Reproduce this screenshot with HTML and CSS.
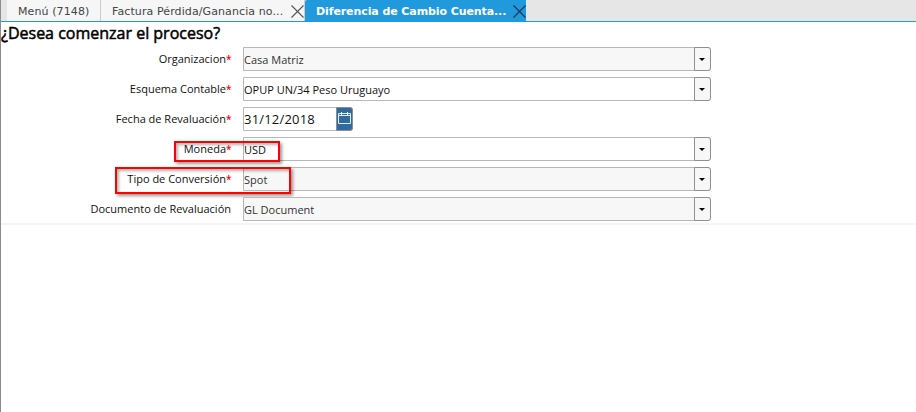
FILE: index.html
```html
<!DOCTYPE html>
<html lang="es">
<head>
<meta charset="utf-8">
<title>Diferencia de Cambio Cuenta</title>
<link rel="stylesheet" href="styles.css">
</head>
<body>
<nav class="tabs">
  <div class="tab tab-menu"><span>Menú (7148)</span></div>
  <div class="tab tab-invoice"><span>Factura Pérdida/Ganancia no...</span>
    <svg class="close" viewBox="0 0 13 13"><path d="M.5 .5l12 12M12.5 .5l-12 12"/></svg></div>
  <div class="tab tab-active"><span>Diferencia de Cambio Cuenta...</span>
    <svg class="close" viewBox="0 0 13 13"><path d="M.5 .5l12 12M12.5 .5l-12 12"/></svg></div>
</nav>
<main class="panel">
  <h1><span>¿Desea comenzar el proceso?</span></h1>
  <form class="form">
    <div class="row"><label>Organizacion<b>*</b></label><div class="combo readonly"><span>Casa Matriz</span><i class="arrow"></i></div></div>
    <div class="row"><label>Esquema Contable<b>*</b></label><div class="combo"><span>OPUP UN/34 Peso Uruguayo</span><i class="arrow"></i></div></div>
    <div class="row"><label>Fecha de Revaluación<b>*</b></label><div class="date"><span>31/12/2018</span><div class="calendar"><svg viewBox="0 0 13 12"><path d="M.5 1.5h12v10H.5zM.5 3.5h12M3.5 0v3M9.5 0v3"/></svg></div></div></div>
    <div class="row"><label>Moneda<b>*</b></label><div class="combo"><span>USD</span><i class="arrow"></i></div><div class="mark mark-currency"></div></div>
    <div class="row"><label>Tipo de Conversión<b>*</b></label><div class="combo readonly"><span>Spot</span><i class="arrow"></i></div><div class="mark mark-type"></div></div>
    <div class="row"><label>Documento de Revaluación</label><div class="combo readonly"><span>GL Document</span><i class="arrow"></i></div></div>
  </form>
</main>
</body>
</html>
```
FILE: styles.css
```css
* { box-sizing: border-box; }
body {
  margin: 0;
  height: 412px;
  overflow: hidden;
  border-left: 1px solid #8c8c8c;
  background: #fff;
  color: #111;
  font: 11px/22px "Open Sans", sans-serif;
}
.tabs {
  display: flex;
  height: 22px;
  padding-left: 6px;
  background: #e6e6e6;
  border-bottom: 1px solid #2199dd;
  font: 11px/22px "DejaVu Sans", sans-serif;
  white-space: nowrap;
}
.tab {
  display: flex;
  align-items: center;
  justify-content: space-between;
  height: 21px;
  background: #f6f6f6;
  border-right: 1px solid #ccc;
  color: #444;
}
.tab span { position: relative; top: 1px; }
.tab-menu { width: 94px; padding-left: 11px; letter-spacing: .1px; }
.tab-invoice { width: 204px; padding: 0 0 0 11px; letter-spacing: .1px; }
.tab-active {
  width: 221px;
  padding: 0 0 0 11px;
  border: 0;
  border-radius: 2px 0 0 0;
  background: #2199dd;
  color: #fff;
  font-weight: bold;
  letter-spacing: -.09px;
}
.close {
  width: 13px;
  height: 13px;
  margin-top: 2px;
  fill: none;
  stroke: #555;
  stroke-width: 1.1;
}
.tab-active .close { stroke: #0b3854; }
.panel {
  height: 203px;
  border-bottom: 2px solid #f4f4f4;
}
h1 {
  margin: 0;
  height: 25px;
  color: #000;
  font-size: 16px;
  font-weight: 400;
  line-height: 23px;
  -webkit-text-stroke: .5px #000;
}
.form { display: grid; grid-auto-rows: 24px; row-gap: 6px; }
.row { position: relative; display: flex; white-space: nowrap; }
label {
  width: 230px;
  margin-right: 12px;
  text-align: right;
  line-height: 24px;
}
label b {
  display: inline-block;
  width: 5px;
  color: #f00;
  font-weight: 600;
  font-size: 10px;
  line-height: 1;
}
.combo {
  display: flex;
  justify-content: space-between;
  width: 468px;
  border: 1px solid #b8b8b8;
  border-radius: 0 3px 3px 0;
  line-height: 24px;
}
.readonly { background: #f7f7f7; color: #333; }
.arrow {
  display: flex;
  align-items: center;
  justify-content: center;
  width: 17px;
  height: 24px;
  margin: -1px;
  border: 1px solid #909090;
  border-radius: 0 3px 3px 0;
  background: #f7f7f7;
}
.arrow::before {
  content: "";
  margin: 0 1px 0 0;
  border: 3px solid transparent;
  border-top-color: #000;
  border-bottom: 0;
}
.date {
  display: flex;
  justify-content: space-between;
  width: 110px;
  border: 1px solid #b8b8b8;
  border-radius: 0 3px 3px 0;
  font-size: 13px;
  letter-spacing: .2px;
}
.calendar {
  width: 17px;
  height: 24px;
  margin: -1px;
  padding: 4px 0 0 1px;
  border: 1px solid #8a8f94;
  border-radius: 0 3px 3px 0;
  background: #336a9c;
  line-height: 0;
}
.calendar svg { width: 13px; height: 12px; fill: none; stroke: #d8f0fa; }
.mark {
  position: absolute;
  border: 2px solid #f00;
  box-shadow: 2px 2px 3px rgba(0, 0, 0, .4), inset 2px 2px 3px rgba(0, 0, 0, .3);
}
.mark-currency { left: 173px; top: 4px; width: 106px; height: 21px; }
.mark-type { left: 114px; top: 0; width: 176px; height: 27px; }
```
